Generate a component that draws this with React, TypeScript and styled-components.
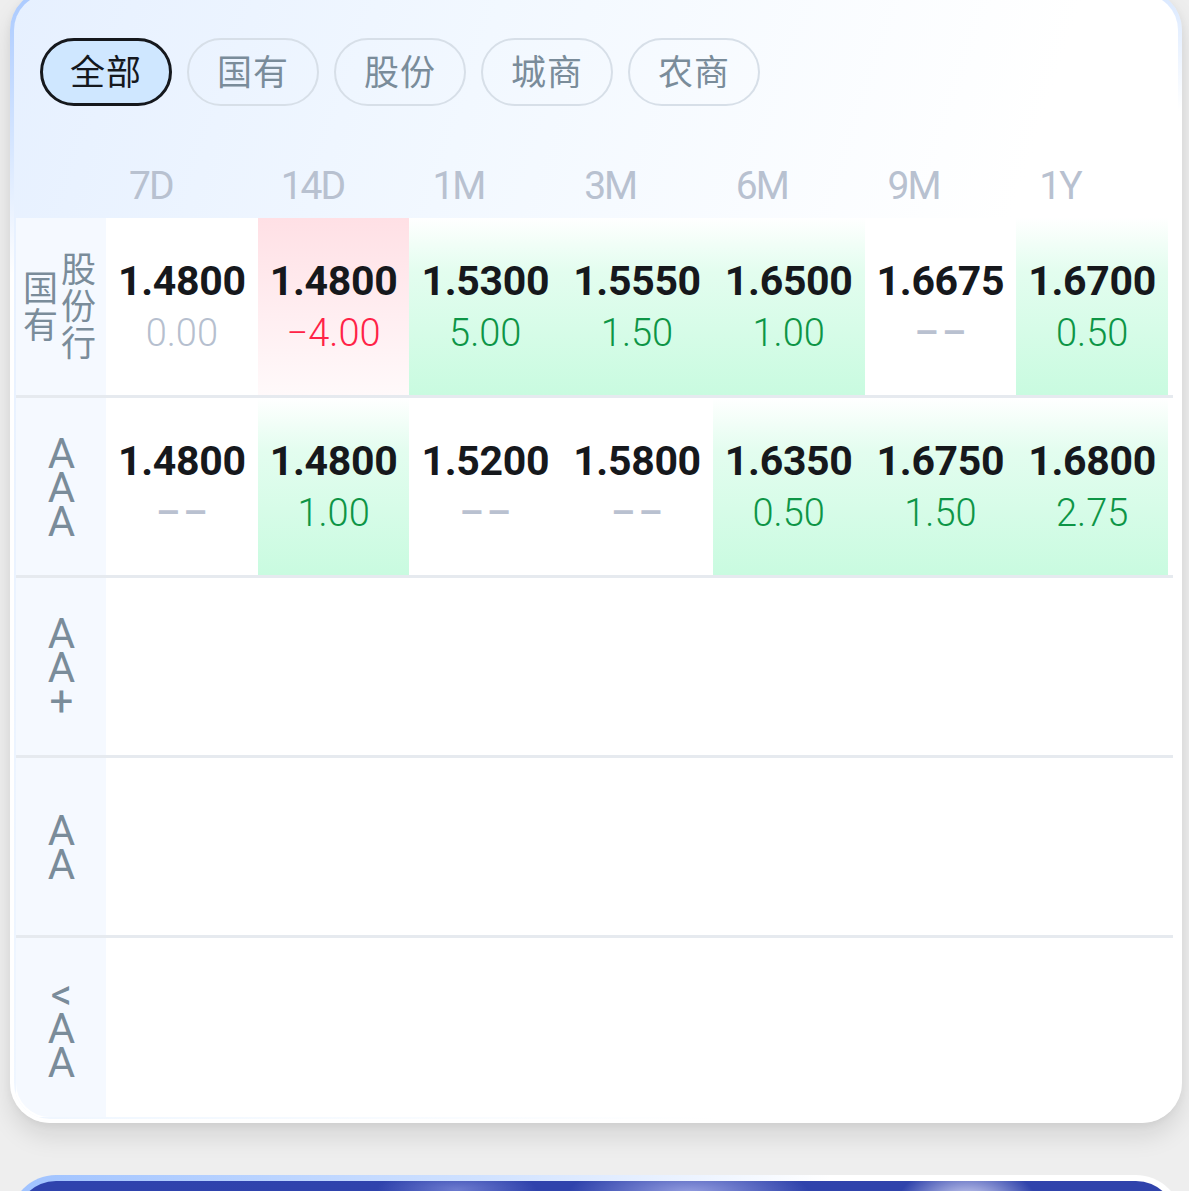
import React from "react";
import styled, { createGlobalStyle, css } from "styled-components";

const GlobalStyle = createGlobalStyle`
  html, body { margin: 0; padding: 0; background: #eeeeee; overflow: hidden; }
  * { box-sizing: border-box; }
`;

const Page = styled.div`
  padding: 0 7px 0 10px;
  height: 1191px;
  overflow: hidden;
  font-family: Roboto, "Noto Sans CJK SC", sans-serif;
`;

const Card = styled.section`
  margin-top: -10px;
  border: 4px solid transparent;
  border-radius: 40px;
  background:
    linear-gradient(108deg, #e6f0ff 0%, #f2f8ff 32%, #ffffff 70%) padding-box,
    linear-gradient(172deg, #a9c9ff 0%, #d6e6ff 12%, #ffffff 22%) border-box;
  box-shadow: 0 14px 24px rgba(0, 0, 0, 0.1), 0 2px 8px rgba(0, 0, 0, 0.05);
  padding: 44px 5px 2px 2px;
  overflow: hidden;
`;

const Tabs = styled.div`
  display: flex;
  gap: 15px;
  padding-left: 24px;
`;

const Tab = styled.div<{ $active?: boolean }>`
  width: 132px;
  height: 68px;
  border-radius: 34px;
  display: flex;
  align-items: center;
  justify-content: center;
  padding-bottom: 5px;
  font-family: "Noto Sans CJK SC", sans-serif;
  font-size: 35px;
  letter-spacing: 1px;
  ${(p) =>
    p.$active
      ? css`
          border: 3px solid #15181d;
          background: #cfe7ff;
          color: #15181d;
        `
      : css`
          border: 2.5px solid #d7dfe8;
          background: transparent;
          color: #7a8c9a;
        `}
`;

const HeaderRow = styled.div`
  display: grid;
  grid-template-columns: 90px repeat(7, 1fr);
  height: 64px;
  margin-top: 48px;
  padding-right: 5px;
  align-items: center;
`;

const HeadCell = styled.div`
  font-family: Roboto, sans-serif;
  font-weight: 400;
  font-size: 39px;
  color: #b8c1d0;
  padding-left: 23px;
  letter-spacing: -2px;
`;

const Row = styled.div<{ $last?: boolean }>`
  display: grid;
  grid-template-columns: 90px repeat(7, 1fr);
  height: ${(p) => (p.$last ? "179px" : "180px")};
  padding-right: 5px;
  border-bottom: ${(p) => (p.$last ? "none" : "3px solid #e6eaef")};
  background: #ffffff;
`;

const LabelCell = styled.div<{ $last?: boolean }>`
  background: #f5f9ff;
  display: flex;
  align-items: center;
  justify-content: center;
  color: #7a8c9a;
  border-bottom-left-radius: ${(p) => (p.$last ? "34px" : "0")};
`;

const CjkLabel = styled.div`
  writing-mode: vertical-lr;
  white-space: pre;
  text-align: center;
  font-family: "Noto Sans CJK SC", sans-serif;
  font-size: 35px;
  line-height: 38px;
  letter-spacing: 2px;
  margin-right: 4px;
`;

const LatinLabel = styled.div`
  writing-mode: vertical-rl;
  text-orientation: upright;
  font-family: Roboto, sans-serif;
  font-size: 42px;
  line-height: 42px;
  letter-spacing: -15px;
  padding-bottom: 14px;
  white-space: nowrap;
`;

type Trend = "up" | "down" | "zero" | "none";

const DataCell = styled.div<{ $trend: Trend }>`
  display: flex;
  flex-direction: column;
  align-items: center;
  justify-content: center;
  background: ${(p) =>
    p.$trend === "up"
      ? "linear-gradient(180deg, #ffffff 0%, #e3fdef 30%, #c9fbe0 100%)"
      : p.$trend === "down"
      ? "linear-gradient(180deg, #ffe0e5 0%, #ffeef1 55%, #fff9fa 100%)"
      : "#ffffff"};
`;

const Value = styled.div`
  font-family: Roboto, sans-serif;
  font-weight: 700;
  font-size: 41px;
  line-height: 52px;
  color: #16181c;
  letter-spacing: -0.3px;
`;

const Change = styled.div<{ $trend: Trend }>`
  font-family: Roboto, sans-serif;
  font-weight: 300;
  font-size: 38px;
  line-height: 52px;
  color: ${(p) =>
    p.$trend === "up" ? "#0d9546" : p.$trend === "down" ? "#ff2347" : "#b6bfcf"};
`;

const Dash = styled.div`
  font-family: Roboto, sans-serif;
  font-weight: 500;
  font-size: 38px;
  line-height: 52px;
  color: #b9c1d0;
  letter-spacing: 3px;
  padding-left: 3px;
`;

const SecondCard = styled.section`
  margin-top: 52px;
  height: 300px;
  border: 6px solid transparent;
  border-radius: 46px;
  background:
    radial-gradient(ellipse 70px 40px at 82% 8%, rgba(235, 235, 255, 0.95), rgba(235, 235, 255, 0) 100%) padding-box,
    radial-gradient(ellipse 120px 30px at 58% 4%, rgba(190, 195, 245, 0.7), rgba(190, 195, 245, 0) 100%) padding-box,
    radial-gradient(ellipse 80px 20px at 38% 3%, rgba(150, 160, 230, 0.6), rgba(150, 160, 230, 0) 100%) padding-box,
    linear-gradient(90deg, #2f43ad 0%, #3043ab 100%) padding-box,
    linear-gradient(90deg, #9fc2ff 0%, #cfe1ff 40%, #ffffff 70%) border-box;
`;

type CellData = { v?: string; d?: string; t: Trend };

const rows: { cjk?: string; latin?: string; cells: CellData[] }[] = [
  {
    cjk: "国有\n股份行",
    cells: [
      { v: "1.4800", d: "0.00", t: "zero" },
      { v: "1.4800", d: "−4.00", t: "down" },
      { v: "1.5300", d: "5.00", t: "up" },
      { v: "1.5550", d: "1.50", t: "up" },
      { v: "1.6500", d: "1.00", t: "up" },
      { v: "1.6675", t: "none" },
      { v: "1.6700", d: "0.50", t: "up" },
    ],
  },
  {
    latin: "AAA",
    cells: [
      { v: "1.4800", t: "none" },
      { v: "1.4800", d: "1.00", t: "up" },
      { v: "1.5200", t: "none" },
      { v: "1.5800", t: "none" },
      { v: "1.6350", d: "0.50", t: "up" },
      { v: "1.6750", d: "1.50", t: "up" },
      { v: "1.6800", d: "2.75", t: "up" },
    ],
  },
  { latin: "AA+", cells: [] },
  { latin: "AA", cells: [] },
  { latin: "<AA", cells: [] },
];

const tabs = ["全部", "国有", "股份", "城商", "农商"];
const terms = ["7D", "14D", "1M", "3M", "6M", "9M", "1Y"];

export default function App() {
  return (
    <Page>
      <GlobalStyle />
      <Card>
        <Tabs>
          {tabs.map((t, i) => (
            <Tab key={t} $active={i === 0}>
              {t}
            </Tab>
          ))}
        </Tabs>
        <HeaderRow>
          <div />
          {terms.map((t) => (
            <HeadCell key={t}>{t}</HeadCell>
          ))}
        </HeaderRow>
        {rows.map((r, ri) => {
          const last = ri === rows.length - 1;
          const cells: CellData[] =
            r.cells.length > 0 ? r.cells : terms.map(() => ({ t: "zero" as Trend }));
          return (
            <Row key={ri} $last={last}>
              <LabelCell $last={last}>
                {r.cjk ? <CjkLabel>{r.cjk}</CjkLabel> : <LatinLabel>{r.latin}</LatinLabel>}
              </LabelCell>
              {cells.map((c, ci) => (
                <DataCell key={ci} $trend={c.v ? c.t : "none"}>
                  {c.v && <Value>{c.v}</Value>}
                  {c.v && (c.d ? <Change $trend={c.t}>{c.d}</Change> : <Dash>––</Dash>)}
                </DataCell>
              ))}
            </Row>
          );
        })}
      </Card>
      <SecondCard />
    </Page>
  );
}
